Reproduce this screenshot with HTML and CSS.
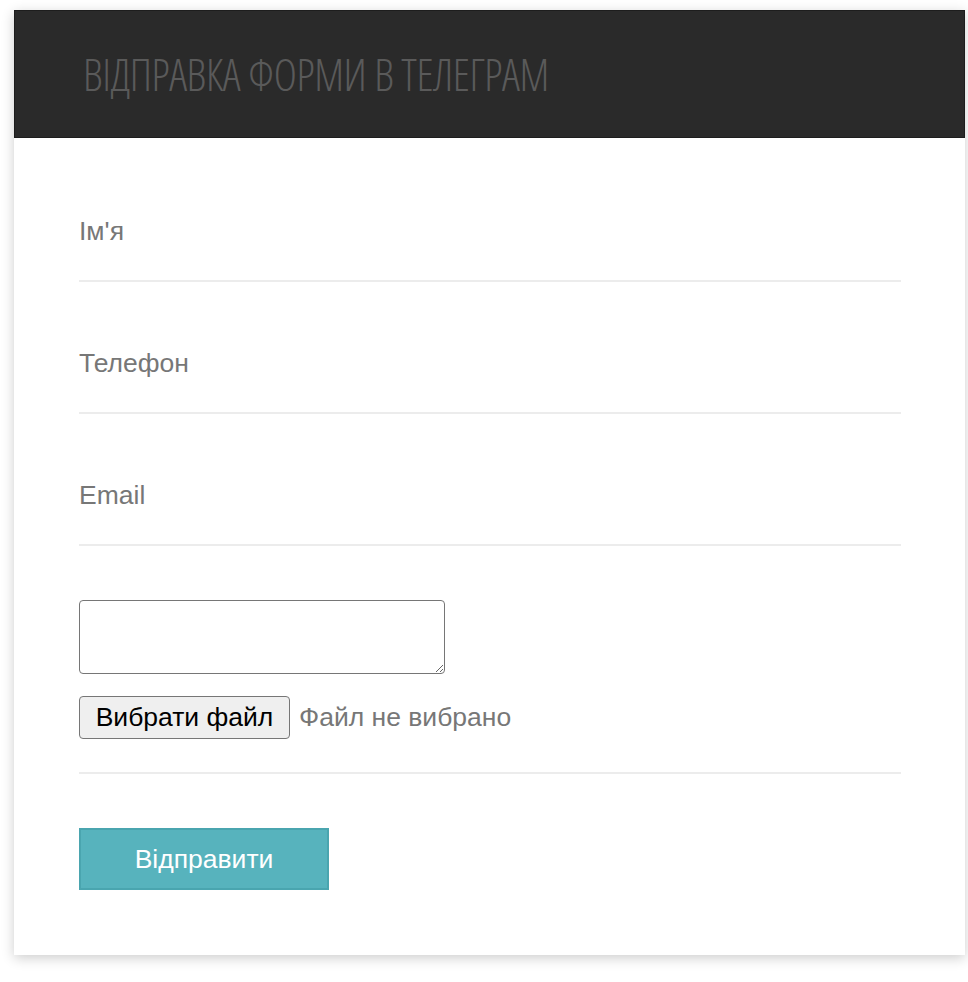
FILE: index.html
```html
<!DOCTYPE html>
<html lang="uk">
<head>
<meta charset="utf-8">
<title>Відправка форми в телеграм</title>
<link rel="stylesheet" href="styles.css">
</head>
<body>
<div class="card">
  <header class="card-head">
    <h1 class="title">ВІДПРАВКА ФОРМИ В ТЕЛЕГРАМ</h1>
  </header>
  <form class="form">
    <div class="field"><input class="line-input" type="text" placeholder="Ім'я"></div>
    <div class="field"><input class="line-input" type="text" placeholder="Телефон"></div>
    <div class="field"><input class="line-input" type="text" placeholder="Email"></div>
    <div class="field extra">
      <textarea class="area"></textarea>
      <div class="file-row">
        <span class="file-btn">Вибрати файл</span>
        <span class="file-name">Файл не вибрано</span>
      </div>
    </div>
    <button type="button" class="submit">Відправити</button>
  </form>
</div>
</body>
</html>
```
FILE: styles.css
```css
* { box-sizing: border-box; }
html, body { margin: 0; padding: 0; background: #fff; }
body { font-family: "Liberation Sans", Arial, sans-serif; padding: 10px 0 27px 0; }

.card {
  width: 951px;
  margin: 0 0 0 14px;
  background: #fff;
  box-shadow: 0 3px 12px rgba(0,0,0,0.2);
}

.card-head {
  height: 128px;
  background: #2a2a2a;
  border: 1px solid #1d1d1d;
  display: flex;
  align-items: center;
  padding-left: 68px;
}

.title {
  margin: 0;
  font-family: "Open Sans", sans-serif;
  font-stretch: 75%;
  font-weight: 300;
  font-size: 44px;
  color: #5a5a5a;
  letter-spacing: -0.4px;
  line-height: 1;
}

.form {
  padding: 12px 64px 65px 65px;
}

.field {
  padding-top: 36px;
  border-bottom: 2px solid #ececec;
}

.line-input {
  display: block;
  width: 100%;
  height: 94px;
  border: 0;
  outline: 0;
  padding: 0 0 3px 0;
  font-family: "Liberation Sans", Arial, sans-serif;
  font-size: 26.5px;
  color: #444;
  background: transparent;
}
.line-input::placeholder { color: #777; }

.extra {
  padding-top: 54px;
  padding-bottom: 33px;
}

.area {
  display: block;
  width: 366px;
  height: 74px;
  border: 1px solid #767676;
  border-radius: 4px;
  resize: both;
  margin: 0 0 22px 0;
}

.file-row {
  display: flex;
  align-items: center;
  gap: 9px;
}

.file-btn {
  display: inline-flex;
  align-items: center;
  justify-content: center;
  width: 211px;
  height: 43px;
  border: 1px solid #767676;
  border-radius: 4px;
  background: #efefef;
  color: #000;
  font-size: 26.5px;
}

.file-name {
  color: #777;
  font-size: 26.5px;
}

.submit {
  display: block;
  margin-top: 54px;
  width: 250px;
  height: 62px;
  background: #57b3bd;
  border: 2px solid #4aa5af;
  border-radius: 0;
  color: #fff;
  font-family: "Liberation Sans", Arial, sans-serif;
  font-size: 26.5px;
  cursor: pointer;
}
```
